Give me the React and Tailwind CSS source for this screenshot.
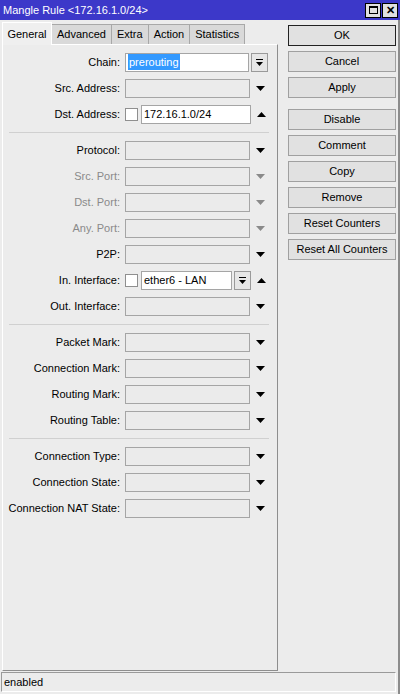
import React from 'react'

const font = { fontFamily: '"Liberation Sans", Arial, sans-serif' }

const Down = ({ grey }) => (
  <svg width="9" height="5" viewBox="0 0 9 5" className="block">
    <polygon points="0,0 9,0 4.5,5" fill={grey ? '#8a8a8a' : '#000'} />
  </svg>
)

const Up = () => (
  <svg width="9" height="5" viewBox="0 0 9 5" className="block">
    <polygon points="0,5 9,5 4.5,0" fill="#000" />
  </svg>
)

const DropBtn = () => (
  <div className="w-[17px] h-[19px] border border-[#9a9a9a] bg-[#e6e6e6] flex items-center justify-center shrink-0">
    <svg width="9" height="9" viewBox="0 0 9 9" className="block">
      <rect x="1" y="1" width="7" height="1" fill="#000" />
      <polygon points="1,4 8,4 4.5,8" fill="#000" />
    </svg>
  </div>
)

const Box = ({ w = 'w-[125px]', white, children }) => (
  <div
    className={`${w} h-[19px] border border-[#a5a5a5] shrink-0 flex items-center px-[2px] text-[11px] text-black ${
      white ? 'bg-white' : 'bg-[#ebebeb]'
    }`}
  >
    {children}
  </div>
)

const Check = () => <div className="w-[13px] h-[13px] border border-[#8f8f8f] bg-white shrink-0" />

const Row = ({ label, grey, children }) => (
  <div className="h-[26px] flex items-center">
    <div
      className={`w-[118px] text-right pr-[1px] text-[11px] whitespace-nowrap ${
        grey ? 'text-[#8a8a8a]' : 'text-black'
      }`}
    >
      {label}
    </div>
    <div className="ml-[4px] flex items-center">{children}</div>
  </div>
)

const Plain = ({ label, grey }) => (
  <Row label={label} grey={grey}>
    <Box />
    <div className="ml-[6px]">
      <Down grey={grey} />
    </div>
  </Row>
)

const Sep = () => (
  <div className="h-[10px] flex items-center pl-[6px] pr-[8px]">
    <div className="h-px w-full bg-[#d0d0d0]" />
  </div>
)

const tabs = ['Advanced', 'Extra', 'Action', 'Statistics']
const buttons = [
  ['OK', true],
  ['Cancel'],
  ['Apply'],
  null,
  ['Disable'],
  ['Comment'],
  ['Copy'],
  ['Remove'],
  ['Reset Counters'],
  ['Reset All Counters'],
]

export default function App() {
  return (
    <div className="w-[400px] h-[694px] bg-[#ececec] flex flex-col overflow-hidden" style={font}>
      {/* Title bar */}
      <div className="h-[20px] bg-[#3c38c9] flex items-center justify-between pl-[3px] pr-[2px]">
        <span className="text-white text-[11px]">Mangle Rule &lt;172.16.1.0/24&gt;</span>
        <div className="flex gap-[1px]">
          <div className="w-[16px] h-[15px] bg-[#e0e0e0] border border-black flex items-center justify-center">
            <div className="w-[9px] h-[8px] border border-black border-t-2" />
          </div>
          <div className="w-[16px] h-[15px] bg-[#e0e0e0] border border-black flex items-center justify-center text-[11px] font-bold leading-none text-black">
            ✕
          </div>
        </div>
      </div>

      <div className="flex-1 flex border-r-2 border-[#8c8c8c]">
        {/* Left: tabs + panel */}
        <div className="w-[278px] pl-[2px] pt-[1px] pb-[1px] flex flex-col">
          <div className="h-[23px] flex items-end">
            <div className="h-[23px] w-[50px] bg-[#efefef] border-t border-l border-r border-white flex items-center justify-center text-[11px] text-black relative top-[1px]">
              General
            </div>
            {tabs.map((t) => (
              <div
                key={t}
                className="h-[20px] px-[5px] bg-[#d9d9d9] border-t border-r border-[#a8a8a8] flex items-center text-[11px] text-black"
              >
                {t}
              </div>
            ))}
          </div>
          <div className="flex-1 border-t border-l border-white border-r border-b border-r-[#8e8e8e] border-b-[#8e8e8e] pt-[4px]">
            <Row label="Chain:">
              <Box w="w-[124px]" white>
                <span className="bg-[#3399ff] text-white px-[1px]">prerouting</span>
              </Box>
              <div className="ml-[2px]">
                <DropBtn />
              </div>
            </Row>
            <Plain label="Src. Address:" />
            <Row label="Dst. Address:">
              <Check />
              <div className="ml-[3px]">
                <Box w="w-[110px]" white>172.16.1.0/24</Box>
              </div>
              <div className="ml-[6px]">
                <Up />
              </div>
            </Row>
            <Sep />
            <Plain label="Protocol:" />
            <Plain label="Src. Port:" grey />
            <Plain label="Dst. Port:" grey />
            <Plain label="Any. Port:" grey />
            <Plain label="P2P:" />
            <Row label="In. Interface:">
              <Check />
              <div className="ml-[3px]">
                <Box w="w-[91px]" white>ether6 - LAN</Box>
              </div>
              <div className="ml-[2px]">
                <DropBtn />
              </div>
              <div className="ml-[6px]">
                <Up />
              </div>
            </Row>
            <Plain label="Out. Interface:" />
            <Sep />
            <Plain label="Packet Mark:" />
            <Plain label="Connection Mark:" />
            <Plain label="Routing Mark:" />
            <Plain label="Routing Table:" />
            <Sep />
            <Plain label="Connection Type:" />
            <Plain label="Connection State:" />
            <Plain label="Connection NAT State:" />
          </div>
        </div>

        {/* Right: buttons */}
        <div className="flex-1 pt-[5px] pl-[10px] pr-[1px] flex flex-col gap-[5px]">
          {buttons.map((b, i) =>
            b ? (
              <div
                key={b[0]}
                className={`h-[21px] w-[108px] bg-[#e1e1e1] border flex items-center justify-center text-[11px] text-black ${
                  b[1] ? 'border-[#222]' : 'border-[#a0a0a0]'
                }`}
              >
                {b[0]}
              </div>
            ) : (
              <div key={'gap' + i} className="h-px" />
            )
          )}
        </div>
      </div>

      {/* Status bar */}
      <div className="h-[22px] border-r-2 border-[#8c8c8c] pl-[1px] pr-[2px] pb-[2px]">
        <div className="h-full border-t border-l border-[#9a9a9a] border-r border-b border-r-white border-b-white flex items-center pl-[2px] text-[11px] text-black">
          enabled
        </div>
      </div>
    </div>
  )
}
